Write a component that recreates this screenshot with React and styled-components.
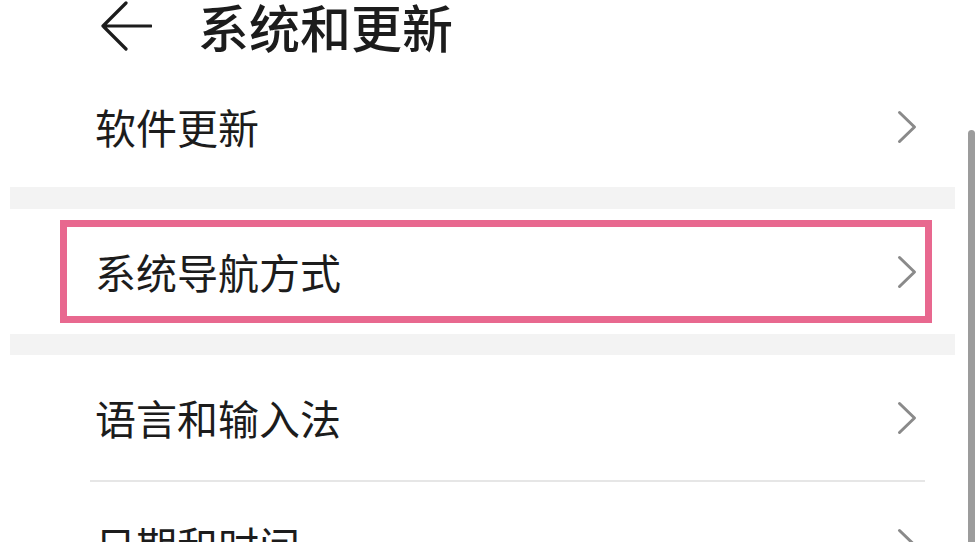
import React from "react";
import styled, { createGlobalStyle } from "styled-components";

const GlobalStyle = createGlobalStyle`
  html, body {
    margin: 0;
    padding: 0;
    background: #ffffff;
    overflow: hidden;
  }
  body {
    font-family: "Noto Sans CJK SC", "Noto Sans", sans-serif;
    color: #1c1c1c;
  }
`;

const Screen = styled.div`
  position: relative;
  width: 979px;
  height: 542px;
  overflow: hidden;
  background: #ffffff;
  padding: 0 24px 0 10px;
  box-sizing: border-box;
`;

const Header = styled.header`
  display: flex;
  align-items: center;
  height: 66px;
  padding: 0 0 12px 88px;
  box-sizing: border-box;
  gap: 46px;
`;

const BackButton = styled.button`
  display: flex;
  align-items: center;
  justify-content: center;
  width: 54px;
  height: 52px;
  padding: 0;
  border: none;
  background: none;
  color: #1c1c1c;
`;

const Title = styled.h1`
  margin: 0;
  font-size: 51px;
  font-weight: 500;
  line-height: 1.2;
  letter-spacing: 0;
`;

const Group = styled.section`
  display: flex;
  flex-direction: column;
  background: #ffffff;
`;

const Gap = styled.div`
  height: ${(p) => p.$h || 21}px;
  background: #f3f3f3;
`;

const Row = styled.div`
  position: relative;
  display: flex;
  align-items: center;
  justify-content: space-between;
  height: ${(p) => p.$h || 125}px;
  padding: 0 38px 0 85px;
  box-sizing: border-box;

  ${(p) =>
    p.$highlight &&
    `
    &::after {
      content: "";
      position: absolute;
      left: 50px;
      right: 23px;
      top: 11px;
      bottom: 11px;
      border: 7px solid #e8688f;
      pointer-events: none;
    }
  `}
`;

const Label = styled.span`
  font-size: 41px;
  font-weight: 400;
  line-height: 1.2;
  color: #1c1c1c;
`;

const Divider = styled.div`
  height: 2px;
  margin: 0 30px 0 80px;
  background: #e6e6e6;
`;

const Scrollbar = styled.div`
  position: absolute;
  right: 4px;
  top: 130px;
  bottom: 0;
  width: 7px;
  border-radius: 4px 4px 0 0;
  background: #9c9c9c;
`;

const BackArrow = () => (
  <svg width="54" height="52" viewBox="0 0 54 52" fill="none">
    <path
      d="M28 2 L5 25 L28 48 M5 25 H53"
      stroke="currentColor"
      strokeWidth="3.2"
      strokeLinecap="round"
      strokeLinejoin="round"
    />
  </svg>
);

const Chevron = () => (
  <svg width="20" height="34" viewBox="0 0 20 34" fill="none">
    <path
      d="M2.5 2.5 L17.5 17 L2.5 31.5"
      stroke="#8a8a8a"
      strokeWidth="3"
      strokeLinecap="round"
      strokeLinejoin="round"
    />
  </svg>
);

const Item = ({ label, h, highlight }) => (
  <Row $h={h} $highlight={highlight}>
    <Label>{label}</Label>
    <Chevron />
  </Row>
);

export default function App() {
  return (
    <Screen>
      <GlobalStyle />
      <Header>
        <BackButton aria-label="返回">
          <BackArrow />
        </BackButton>
        <Title>系统和更新</Title>
      </Header>

      <Group>
        <Item label="软件更新" h={121} />
      </Group>
      <Gap $h={22} />
      <Group>
        <Item label="系统导航方式" highlight />
      </Group>
      <Gap />
      <Group>
        <Item label="语言和输入法" />
        <Divider />
        <Item label="日期和时间" />
      </Group>

      <Scrollbar />
    </Screen>
  );
}
